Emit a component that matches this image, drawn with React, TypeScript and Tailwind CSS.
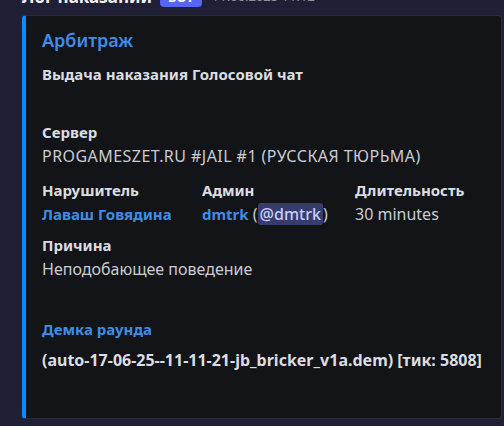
import React from 'react';

const Field = ({ name, children, className = '' }: { name: string; children: React.ReactNode; className?: string }) => (
  <div className={className}>
    <div className="text-[15px] font-bold leading-[24px] text-[#dbdee1]">{name}</div>
    <div className="text-[16px] leading-[24px] text-[#c9ccd2]">{children}</div>
  </div>
);

const App = () => {
  return (
    <div
      className="h-[426px] w-[504px] overflow-hidden bg-[#1f2035] text-[15px]"
      style={{ fontFamily: '"Noto Sans", "Open Sans", sans-serif' }}
    >
      <div className="pl-[22px]">
        {/* message header, mostly scrolled out of view */}
        <div className="-mt-[13px] flex h-[20px] items-center">
          <span className="w-[138px] text-[17px] font-bold text-[#f2f3f5]">Лог наказаний</span>
          <span className="rounded-[4px] bg-[#5865f2] px-[8px] text-[13px] font-bold leading-[20px] text-white">БОТ</span>
          <span className="ml-[10px] text-[13px] text-[#8e909a]">11.06.2025 11:12</span>
        </div>

        {/* embed */}
        <div className="mt-[8px] h-[404px] w-[480px] rounded-[4px] border border-l-4 border-[#2a2c32] border-l-[#0a8cff] bg-[#131417] pl-[16px] pr-[16px] pt-[12px]">
          <div className="text-[18px] font-semibold leading-[24px] text-[#3d8ee8]">Арбитраж</div>
          <div className="mt-[10px] font-bold leading-[24px] text-[#dbdee1]">Выдача наказания Голосовой чат</div>

          <Field name="Сервер" className="mt-[34px]">
            <span className="tracking-[0.45px]">PROGAMESZET.RU #JAIL #1 (РУССКАЯ ТЮРЬМА)</span>
          </Field>

          <div className="mt-[10px] grid grid-cols-[152px_145px_1fr] gap-x-[8px]">
            <Field name="Нарушитель">
              <span className="text-[15px] font-bold text-[#3d8ee8]">Лаваш Говядина</span>
            </Field>
            <Field name="Админ">
              <span className="text-[15px] font-bold text-[#3d8ee8]">dmtrk</span>{' '}
              (<span className="rounded-[3px] bg-[#363c6e] px-[2px] font-medium text-[#c9cdfb]">@dmtrk</span>)
            </Field>
            <Field name="Длительность">30 minutes</Field>
          </div>

          <Field name="Причина" className="mt-[7px]">
            Неподобающее поведение
          </Field>

          <div className="mt-[36px] font-bold leading-[24px] text-[#3d8ee8]">Демка раунда</div>
          <div className="mt-[7px] text-[16px] font-bold leading-[24px] text-[#dbdee1]">
            (auto-17-06-25--11-11-21-jb_bricker_v1a.dem) [тик: 5808]
          </div>
        </div>
      </div>
    </div>
  );
};

export default App;
